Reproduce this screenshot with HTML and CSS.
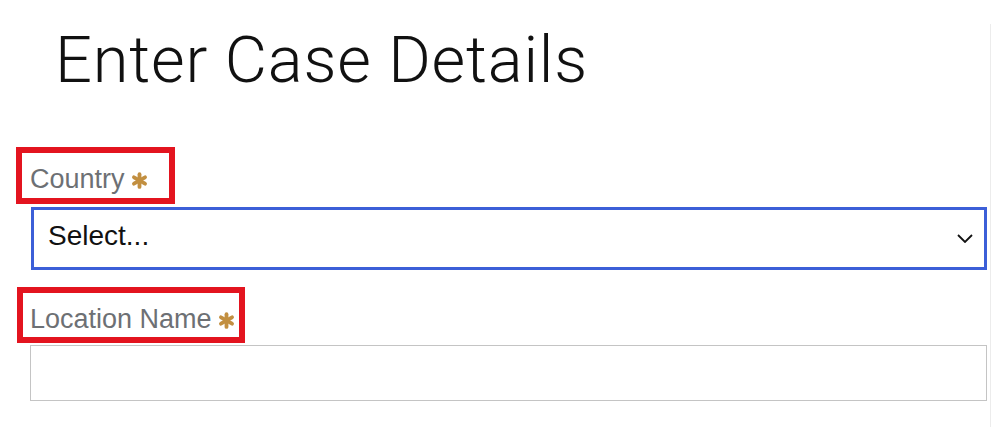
FILE: index.html
```html
<!DOCTYPE html>
<html lang="en">
<head>
<meta charset="utf-8">
<title>Enter Case Details</title>
<link rel="stylesheet" href="styles.css">
</head>
<body>
<div class="panel">
  <h1 class="title">Enter Case Details</h1>
  <form class="form">
    <div class="field">
      <label class="label label--country">Country<svg class="req" viewBox="0 0 16 16" width="17" height="17"><g stroke="#c28f40" stroke-width="3.6" stroke-linecap="round"><line x1="8" y1="2" x2="8" y2="14"/><line x1="2.8" y1="5" x2="13.2" y2="11"/><line x1="2.8" y1="11" x2="13.2" y2="5"/></g></svg></label>
      <div class="select">
        <span class="select-value">Select...</span>
        <svg class="chevron" viewBox="0 0 16 9" width="16" height="9"><polyline points="1,1 8,8 15,1" fill="none" stroke="#111" stroke-width="1.8"/></svg>
      </div>
    </div>
    <div class="field">
      <label class="label label--location">Location Name<svg class="req" viewBox="0 0 16 16" width="17" height="17"><g stroke="#c28f40" stroke-width="3.6" stroke-linecap="round"><line x1="8" y1="2" x2="8" y2="14"/><line x1="2.8" y1="5" x2="13.2" y2="11"/><line x1="2.8" y1="11" x2="13.2" y2="5"/></g></svg></label>
      <div class="input"></div>
    </div>
  </form>
</div>
</body>
</html>
```

FILE: styles.css
```css
html, body {
  margin: 0;
  padding: 0;
  background: #ffffff;
  height: 100%;
  overflow: hidden;
}

.panel {
  margin-top: 24px;
  width: 991px;
  min-height: 403px;
  border-right: 1px solid #ececec;
  box-sizing: border-box;
}

.title {
  margin: 0;
  padding-left: 55px;
  font-family: Roboto, "Liberation Sans", sans-serif;
  font-weight: 300;
  font-size: 65px;
  letter-spacing: 0.8px;
  line-height: 72px;
  color: #111111;
}

.form {
  margin-top: 51px;
  padding-left: 16px;
  display: flex;
  flex-direction: column;
  gap: 17px;
}

.field {
  display: flex;
  flex-direction: column;
  align-items: flex-start;
}

.label {
  display: inline-flex;
  align-items: center;
  box-sizing: border-box;
  border: 6px solid #e3141f;
  padding: 11px 0 4px 8px;
  font-family: "Liberation Sans", Arial, sans-serif;
  font-size: 27px;
  line-height: 30px;
  color: #6d7074;
}

.label--country {
  width: 159px;
  height: 57px;
}

.label--location {
  width: 228px;
  height: 56px;
  margin-left: 1px;
  padding-left: 7px;
}

.req {
  margin-left: 6px;
  margin-top: 3px;
}

.select {
  margin-top: 3px;
  margin-left: 15px;
  width: 956px;
  height: 63px;
  box-sizing: border-box;
  border: 3px solid #3c5fd8;
  display: flex;
  align-items: flex-start;
  justify-content: space-between;
  padding: 10px 11px 0 14px;
}

.select-value {
  font-family: "Liberation Sans", Arial, sans-serif;
  font-size: 28px;
  line-height: 32px;
  color: #111111;
}

.chevron {
  margin-top: 14px;
}

.input {
  margin-top: 2px;
  margin-left: 14px;
  width: 957px;
  height: 56px;
  box-sizing: border-box;
  border: 1px solid #c4c4c4;
}
```
